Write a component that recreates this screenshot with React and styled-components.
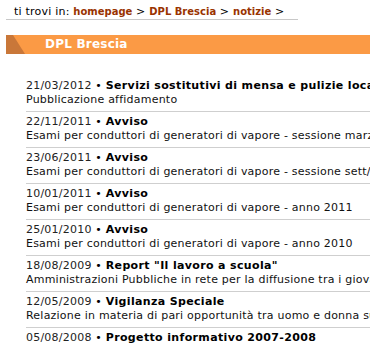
import styled, { createGlobalStyle } from 'styled-components';

const GlobalStyle = createGlobalStyle`
  body {
    margin: 0;
    background: #fff;
    font-family: Verdana, "DejaVu Sans", sans-serif;
    font-size: 11px;
    letter-spacing: 0.22px;
    color: #000;
    overflow: hidden;
  }
`;

const Page = styled.div`
  width: 420px;
  padding-left: 6px;
`;

const Breadcrumb = styled.div`
  width: 284px;
  padding: 5px 0 0 8px;
  line-height: 14px;
  border-bottom: 1px solid #c8c8c8;
  white-space: nowrap;
`;

const Crumb = styled.a`
  color: #993300;
  font-size: 10px;
  font-weight: bold;
  letter-spacing: 0;
  text-decoration: none;
`;

// barra arancione con la punta scura a sinistra
const TitleBar = styled.div`
  position: relative;
  margin-top: 15px;
  height: 19px;
  background: #fb9a45;
  overflow: hidden;
`;

const Corner = styled.svg`
  position: absolute;
  left: 0;
  top: 0;
`;

const Title = styled.h1`
  position: relative;
  margin: 0;
  padding-left: 39px;
  font-size: 12px;
  line-height: 19px;
  font-weight: bold;
  color: #fff;
`;

const List = styled.ul`
  list-style: none;
  margin: 25px 0 0 20px;
  padding: 0;
`;

const Item = styled.li`
  padding: 0 0 4px;
  border-bottom: 1px solid #cfcfcf;
  margin-bottom: 3px;
  line-height: 14px;
  white-space: nowrap;
`;

const Date = styled.span`
  color: #222;
`;

const Head = styled.a`
  color: #000;
  font-weight: bold;
  letter-spacing: 0.35px;
  text-decoration: none;
`;

const Desc = styled.div`
  color: #111;
`;

const notizie = [
  { date: '21/03/2012', title: 'Servizi sostitutivi di mensa e pulizie locali', desc: 'Pubblicazione affidamento' },
  { date: '22/11/2011', title: 'Avviso', desc: 'Esami per conduttori di generatori di vapore - sessione marzo 2012' },
  { date: '23/06/2011', title: 'Avviso', desc: 'Esami per conduttori di generatori di vapore - sessione sett/ott 2011' },
  { date: '10/01/2011', title: 'Avviso', desc: 'Esami per conduttori di generatori di vapore - anno 2011' },
  { date: '25/01/2010', title: 'Avviso', desc: 'Esami per conduttori di generatori di vapore - anno 2010' },
  { date: '18/08/2009', title: 'Report "Il lavoro a scuola"', desc: 'Amministrazioni Pubbliche in rete per la diffusione tra i giovani' },
  { date: '12/05/2009', title: 'Vigilanza Speciale', desc: 'Relazione in materia di pari opportunità tra uomo e donna sul lavoro' },
  { date: '05/08/2008', title: 'Progetto informativo 2007-2008', desc: 'Iniziative di informazione' },
];

const App = () => {
  return (
    <Page>
      <GlobalStyle />
      <Breadcrumb>
        ti trovi in: <Crumb href="#">homepage</Crumb> &gt; <Crumb href="#">DPL Brescia</Crumb> &gt;{' '}
        <Crumb href="#">notizie</Crumb> &gt;
      </Breadcrumb>
      <TitleBar>
        <Corner width="26" height="19" viewBox="0 0 26 19">
          <polygon points="0,0 7,0 19,19 0,19" fill="#c97739" />
        </Corner>
        <Title>DPL Brescia</Title>
      </TitleBar>
      <List>
        {notizie.map((n, i) => (
          <Item key={i}>
            <Date>{n.date}</Date> • <Head href="#">{n.title}</Head>
            <Desc>{n.desc}</Desc>
          </Item>
        ))}
      </List>
    </Page>
  );
};

export default App;
